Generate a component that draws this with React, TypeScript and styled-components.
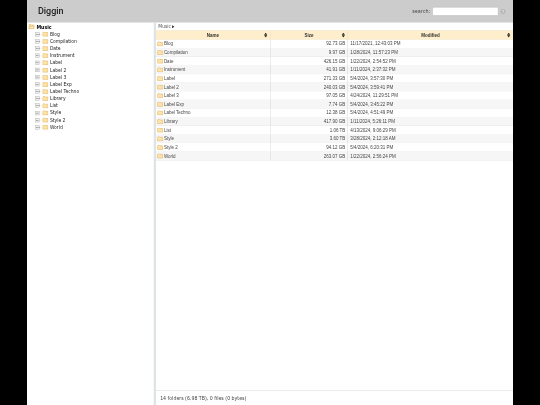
import React from "react";
import styled, { createGlobalStyle } from "styled-components";

const Global = createGlobalStyle`
  html, body { margin: 0; padding: 0; background: #000; height: 100%; overflow: hidden; }
  #root { height: 100%; }
`;

/* The reference is a 1296x1080 page photographed at 37.5%. */
const Page = styled.div`
  width: 1296px;
  height: 1080px;
  margin-left: 27px;
  transform: scale(0.375);
  transform-origin: top left;
  filter: blur(0.5px);
  background: #fff;
  display: flex;
  flex-direction: column;
  font-family: "Liberation Sans", Arial, sans-serif;
`;

const Header = styled.header`
  height: 60px;
  flex: none;
  background: #cccccc;
  display: flex;
  align-items: center;
  padding: 0 20px 0 29px;
`;

const Title = styled.h1`
  margin: 0;
  flex: 1;
  font: 500 24px "Roboto", sans-serif;
  color: #222;
`;

const SearchLabel = styled.label`
  font: 13px "DejaVu Sans", sans-serif;
  color: #444;
  margin-right: 6px;
`;

const SearchInput = styled.input`
  width: 176px;
  height: 23px;
  box-sizing: border-box;
  padding: 0;
  margin: 0 6px 0 0;
  background: #fff;
  border: 1px solid #aaa;
  border-radius: 2px;
  outline: none;
`;

const Help = styled.span`
  width: 13px;
  height: 13px;
  border-radius: 50%;
  background: #b4b4b4;
  color: #eee;
  font: bold 10px "Liberation Sans", sans-serif;
  display: flex;
  align-items: center;
  justify-content: center;
`;

const Main = styled.div`
  flex: 1;
  display: flex;
  min-height: 0;
`;

const Tree = styled.nav`
  width: 338px;
  flex: none;
  padding-top: 1px;
  font: 12px "DejaVu Sans", sans-serif;
  color: #222;
`;

const Node = styled.div<{ $root?: boolean }>`
  height: ${(p) => (p.$root ? "20.5px" : "19.1px")};
  display: flex;
  align-items: center;
  white-space: nowrap;
  padding-left: ${(p) => (p.$root ? "4px" : "22px")};
  font-weight: ${(p) => (p.$root ? 700 : 400)};
  font-size: ${(p) => (p.$root ? "12.5px" : "12px")};
  color: ${(p) => (p.$root ? "#000" : "#222")};
`;

const Expander = styled.span`
  width: 11px;
  height: 11px;
  box-sizing: border-box;
  border: 1px solid #aaa;
  background: linear-gradient(#444, #444) center / 7px 1px no-repeat, #eee;
  flex: none;
`;

const Connector = styled.span`
  width: 6px;
  height: 0;
  border-top: 1px dotted #aaa;
  margin-right: 2px;
  flex: none;
`;

const FolderIcon = styled.svg<{ $gap: number }>`
  width: 16px;
  height: 14px;
  flex: none;
  margin-right: ${(p) => p.$gap}px;
`;

const Splitter = styled.div`
  width: 6px;
  flex: none;
  background: #dfe3e6;
`;

const Pane = styled.section`
  flex: 1;
  min-width: 0;
  display: flex;
  flex-direction: column;
`;

const Crumb = styled.div`
  height: 21px;
  flex: none;
  display: flex;
  align-items: center;
  gap: 3px;
  padding-left: 6px;
  font: 12px "DejaVu Sans", sans-serif;
  color: #555;
`;

const Arrow = styled.span`
  width: 0;
  height: 0;
  border-left: 6px solid #222;
  border-top: 4px solid transparent;
  border-bottom: 4px solid transparent;
`;

const Table = styled.div`
  flex: none;
  display: flex;
  flex-direction: column;
`;

const HeadRow = styled.div`
  display: grid;
  grid-template-columns: 305px 207px 1fr;
  height: 25px;
  background: #ffeecb;
  border-top: 1px solid #eadfc4;
  border-bottom: 1px solid #eadfc4;
  box-sizing: border-box;
`;

const HeadCell = styled.div`
  position: relative;
  display: flex;
  align-items: center;
  justify-content: center;
  font: bold 12px "Liberation Sans", sans-serif;
  color: #333;
  border-right: 1px solid #e3d8bd;
  &:last-child { border-right: 0; }
`;

const SortIcon = styled.svg`
  position: absolute;
  right: 7px;
  top: 5px;
  width: 9px;
  height: 13px;
`;

const Row = styled.div<{ $odd: boolean }>`
  display: grid;
  grid-template-columns: 305px 207px 1fr;
  height: 23px;
  box-sizing: border-box;
  background: ${(p) => (p.$odd ? "#f6f6f6" : "#fff")};
  border-bottom: 1px solid #e4e4e4;
  font: 12px "Liberation Sans", sans-serif;
  color: #444;
`;

const NameCell = styled.div`
  display: flex;
  align-items: center;
  padding-left: 3px;
  border-right: 1px solid #ccc;
  white-space: nowrap;
`;

const SizeCell = styled.div`
  display: flex;
  align-items: center;
  justify-content: flex-end;
  padding-right: 6px;
  border-right: 1px solid #ccc;
`;

const DateCell = styled.div`
  display: flex;
  align-items: center;
  padding-left: 6px;
`;

const Spacer = styled.div`
  flex: 1;
`;

const Status = styled.footer`
  height: 39px;
  flex: none;
  box-sizing: border-box;
  border-top: 1px solid #ccc;
  display: flex;
  align-items: center;
  padding-left: 11px;
  font: 12.5px "DejaVu Sans", sans-serif;
  color: #444;
`;

const Folder = ({ gap, open }: { gap: number; open?: boolean }) => (
  <FolderIcon $gap={gap} viewBox="0 0 17 14">
    <path d="M1 13V2.5L2.5 1h4L8 2.5h7.5L16 3.5V13z" fill="#fde3a7" stroke="#dca24a" strokeWidth="1.3" strokeLinejoin="round" />
    {open && <path d="M1 13 4 6h12.5L14 13z" fill="#feeec8" stroke="#dca24a" strokeWidth="1.3" strokeLinejoin="round" />}
  </FolderIcon>
);

const rows: [string, string, string][] = [
  ["Blog", "92.73 GB", "11/17/2021, 12:43:03 PM"],
  ["Compilation", "9.97 GB", "1/28/2024, 11:57:23 PM"],
  ["Date", "426.15 GB", "1/22/2024, 2:54:52 PM"],
  ["Instrument", "41.91 GB", "1/11/2024, 2:37:32 PM"],
  ["Label", "271.33 GB", "5/4/2024, 3:57:30 PM"],
  ["Label 2", "240.03 GB", "5/4/2024, 3:59:41 PM"],
  ["Label 3", "97.05 GB", "4/24/2024, 11:29:51 PM"],
  ["Label Exp", "7.74 GB", "5/4/2024, 3:45:22 PM"],
  ["Label Techno", "12.38 GB", "5/4/2024, 4:51:49 PM"],
  ["Library", "417.90 GB", "1/11/2024, 5:26:11 PM"],
  ["List", "1.06 TB", "4/13/2024, 9:06:29 PM"],
  ["Style", "3.60 TB", "3/28/2024, 2:12:18 AM"],
  ["Style 2", "94.12 GB", "5/4/2024, 6:20:31 PM"],
  ["World", "263.07 GB", "1/22/2024, 2:56:24 PM"],
];

const Sort = () => (
  <SortIcon viewBox="0 0 6 9">
    <path d="M3 0 6 4H0zM3 9 0 5h6z" fill="#222" />
  </SortIcon>
);

export default function App() {
  return (
    <>
      <Global />
      <Page>
        <Header>
          <Title>Diggin</Title>
          <SearchLabel htmlFor="q">search:</SearchLabel>
          <SearchInput id="q" />
          <Help>?</Help>
        </Header>
        <Main>
          <Tree>
            <Node $root>
              <Folder gap={5} open />
              Music
            </Node>
            {rows.map(([n]) => (
              <Node key={n}>
                <Expander />
                <Connector />
                <Folder gap={4} />
                {n}
              </Node>
            ))}
          </Tree>
          <Splitter />
          <Pane>
            <Crumb>
              Music <Arrow />
            </Crumb>
            <Table>
              <HeadRow>
                <HeadCell>Name<Sort /></HeadCell>
                <HeadCell>Size<Sort /></HeadCell>
                <HeadCell>Modified<Sort /></HeadCell>
              </HeadRow>
              {rows.map((r, i) => (
                <Row key={r[0]} $odd={i % 2 === 1}>
                  <NameCell><Folder gap={2} />{r[0]}</NameCell>
                  <SizeCell>{r[1]}</SizeCell>
                  <DateCell>{r[2]}</DateCell>
                </Row>
              ))}
            </Table>
            <Spacer />
            <Status>14 folders (6.98 TB), 0 files (0 bytes)</Status>
          </Pane>
        </Main>
      </Page>
    </>
  );
}
